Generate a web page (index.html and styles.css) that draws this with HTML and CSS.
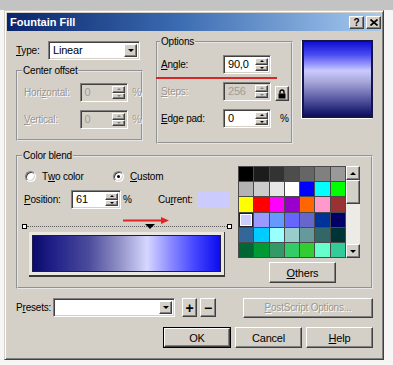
FILE: index.html
```html
<!DOCTYPE html>
<html lang="en">
<head>
  <meta charset="UTF-8">
  <title>Fountain Fill</title>
  <link rel="stylesheet" href="styles.css">
</head>
<body>
  <div class="dlg">
    <div class="titlebar">
      <span class="title">Fountain Fill</span>
      <div class="tbtns">
        <span class="tbtn q">?</span>
        <span class="tbtn"><svg width="8" height="7" viewBox="0 0 8 7"><path d="M0.5 0.5 L7.5 6.5 M7.5 0.5 L0.5 6.5" stroke="#000" stroke-width="1.7" fill="none"/></svg></span>
      </div>
    </div>

    <div class="main">
      <div class="top">
        <div class="leftcol">
          <div class="typerow">
            <span class="lbl w-type"><u>T</u>ype:</span>
            <div class="combo type-combo">
              <span class="txt">Linear</span>
              <span class="ddbtn"><i class="arr-down big"></i></span>
            </div>
          </div>

          <fieldset class="grp center-grp">
            <legend>Center offset</legend>
            <div class="frows">
              <div class="frow">
                <span class="lbl dis w-center">Hori<u>z</u>ontal:</span>
                <div class="spinfield sf-center dis">
                  <span class="txt">0</span>
                  <div class="spin"><span class="sb"><i class="arr-up"></i></span><span class="sb"><i class="arr-down"></i></span></div>
                </div>
                <span class="unit dis u-center">%</span>
              </div>
              <div class="frow">
                <span class="lbl dis w-center"><u>V</u>ertical:</span>
                <div class="spinfield sf-center dis">
                  <span class="txt">0</span>
                  <div class="spin"><span class="sb"><i class="arr-up"></i></span><span class="sb"><i class="arr-down"></i></span></div>
                </div>
                <span class="unit dis u-center">%</span>
              </div>
            </div>
          </fieldset>
        </div>

        <fieldset class="grp opt-grp">
          <legend>Options</legend>
          <div class="frows opt-rows">
            <div class="frow">
              <span class="lbl w-opt"><u>A</u>ngle:</span>
              <div class="spinfield sf-opt">
                <span class="txt">90,0</span>
                <div class="spin"><span class="sb"><i class="arr-up"></i></span><span class="sb"><i class="arr-down"></i></span></div>
              </div>
            </div>
            <div class="frow">
              <span class="lbl dis w-opt"><u>S</u>teps:</span>
              <div class="spinfield sf-opt dis">
                <span class="txt">256</span>
                <div class="spin"><span class="sb"><i class="arr-up"></i></span><span class="sb"><i class="arr-down"></i></span></div>
              </div>
              <span class="btn lock">
                <svg width="8" height="10" viewBox="0 0 8 10"><path d="M2 4.5 V3 a2 2 0 0 1 4 0 V4.5" stroke="#000" stroke-width="1.4" fill="none"/><rect x="0.5" y="4.5" width="7" height="5" fill="#000"/></svg>
              </span>
            </div>
            <div class="frow">
              <span class="lbl w-opt"><u>E</u>dge pad:</span>
              <div class="spinfield sf-opt">
                <span class="txt">0</span>
                <div class="spin"><span class="sb"><i class="arr-up"></i></span><span class="sb"><i class="arr-down"></i></span></div>
              </div>
              <span class="unit u-edge">%</span>
            </div>
          </div>
        </fieldset>

        <div class="preview"></div>
      </div>

      <fieldset class="grp blend-grp">
        <legend>Color blend</legend>
        <div class="blend-body">
          <div class="blend-left">
            <div class="radios">
              <span class="radio r-two"><span class="rb"></span>T<u>w</u>o color</span>
              <span class="radio"><span class="rb on"></span><u>C</u>ustom</span>
            </div>
            <div class="posrow">
              <span class="lbl w-pos"><u>P</u>osition:</span>
              <div class="spinfield sf-pos">
                <span class="txt">61</span>
                <div class="spin"><span class="sb"><i class="arr-up"></i></span><span class="sb"><i class="arr-down"></i></span></div>
              </div>
              <span class="unit u-pos">%</span>
              <span class="lbl cur-lbl">Cu<u>r</u>rent:</span>
              <span class="cur-swatch"></span>
            </div>
            <div class="ruler">
              <span class="node"></span>
              <span class="track"></span>
              <span class="node"></span>
              <i class="marker" style="left: 61%"></i>
            </div>
            <div class="barframe"><div class="bar"></div></div>
          </div>

          <div class="blend-right">
            <div class="palrow">
              <div class="palette">
                <span style="background:#000000"></span>
                <span style="background:#1c1c1c"></span>
                <span style="background:#333333"></span>
                <span style="background:#4d4d4d"></span>
                <span style="background:#666666"></span>
                <span style="background:#808080"></span>
                <span style="background:#999999"></span>

                <span style="background:#b3b3b3"></span>
                <span style="background:#cccccc"></span>
                <span style="background:#e6e6e6"></span>
                <span style="background:#ffffff"></span>
                <span style="background:#0000ff"></span>
                <span style="background:#00ffff"></span>
                <span style="background:#00ff00"></span>

                <span style="background:#ffff00"></span>
                <span style="background:#ff0000"></span>
                <span style="background:#ff00ff"></span>
                <span style="background:#9900cc"></span>
                <span style="background:#ff6600"></span>
                <span style="background:#ff99cc"></span>
                <span style="background:#993333"></span>

                <span class="sel" style="background:#ccccff"></span>
                <span style="background:#9999ff"></span>
                <span style="background:#6699ff"></span>
                <span style="background:#6666ff"></span>
                <span style="background:#6666cc"></span>
                <span style="background:#003399"></span>
                <span style="background:#000066"></span>

                <span style="background:#336699"></span>
                <span style="background:#00ccff"></span>
                <span style="background:#99ffff"></span>
                <span style="background:#99cccc"></span>
                <span style="background:#669999"></span>
                <span style="background:#336666"></span>
                <span style="background:#003333"></span>

                <span style="background:#006633"></span>
                <span style="background:#009933"></span>
                <span style="background:#339966"></span>
                <span style="background:#33cc66"></span>
                <span style="background:#33cc33"></span>
                <span style="background:#66ffcc"></span>
                <span style="background:#33cc99"></span>
              </div>
              <div class="vscroll">
                <span class="btn sbtn"><i class="arr-up big"></i></span>
                <span class="btn thumb"></span>
                <span class="strack"></span>
                <span class="btn sbtn"><i class="arr-down big"></i></span>
              </div>
            </div>
            <span class="btn others"><u>O</u>thers</span>
          </div>
        </div>
      </fieldset>

      <div class="presets">
        <span class="lbl w-pre">P<u>r</u>esets:</span>
        <div class="combo pre-combo">
          <span class="txt"></span>
          <span class="ddbtn"><i class="arr-down big"></i></span>
        </div>
        <span class="btn pm plus">+</span>
        <span class="btn pm minus">&minus;</span>
        <span class="btn ps dis"><u>P</u>ostScript Options...</span>
      </div>

      <div class="buttons">
        <span class="defbtn"><span class="btn">OK</span></span>
        <span class="btn">Cancel</span>
        <span class="btn"><u>H</u>elp</span>
      </div>
    </div>

    <div class="redline"></div>
    <svg class="redarrow" width="47" height="9" viewBox="0 0 47 9">
      <path d="M0 4.5 H40" stroke="#e02424" stroke-width="2"/>
      <path d="M38 1 L46 4.5 L38 8 Z" fill="#e02424"/>
    </svg>
  </div>
</body>
</html>
```

FILE: styles.css
```css
* {
  box-sizing: border-box;
}

html,
body {
  margin: 0;
  height: 100%;
}

body {
  padding: 10px 0 0 4px;
  background: linear-gradient(#c3c3c3, #c3c3c3) top left / 100% 10px no-repeat, #f6f6f6;
  font-family: "Liberation Sans", sans-serif;
  font-size: 10px;
  letter-spacing: -0.2px;
  color: #000;
  overflow: hidden;
}

u {
  text-decoration: underline;
  text-underline-offset: 1px;
}

/* window frame */
.dlg {
  position: relative;
  width: 380px;
  height: 350px;
  padding: 2px;
  background: #d4d0c8;
  border: 1px solid;
  border-color: #d4d0c8 #404040 #404040 #d4d0c8;
  box-shadow: inset 1px 1px #fff, inset -1px -1px #808080;
}

.titlebar {
  display: flex;
  align-items: center;
  justify-content: space-between;
  height: 18px;
  padding: 0 0 0 3px;
  background: linear-gradient(90deg, #0a246a, #3a6ab0 45%, #a6caf0);
}

.title {
  color: #fff;
  font-weight: bold;
  font-size: 11px;
  letter-spacing: 0;
}

.tbtns {
  display: flex;
  gap: 2px;
}

.tbtn {
  display: flex;
  align-items: center;
  justify-content: center;
  width: 15px;
  height: 13px;
  background: #d4d0c8;
  border: 1px solid;
  border-color: #fff #404040 #404040 #fff;
  box-shadow: inset -1px -1px #808080;
}

.tbtn.q {
  font-weight: bold;
  font-size: 10px;
  line-height: 11px;
}

/* shared bevels */
.btn,
.sb,
.ddbtn {
  display: flex;
  align-items: center;
  justify-content: center;
  background: #d4d0c8;
  border: 1px solid;
  border-color: #fff #404040 #404040 #fff;
  box-shadow: inset -1px -1px #808080;
}

.combo,
.spinfield {
  display: flex;
  padding: 2px;
  background: #fff;
  border: 1px solid;
  border-color: #808080 #fff #fff #808080;
  box-shadow: inset 1px 1px #404040, inset -1px -1px #d4d0c8;
}

.combo .txt,
.spinfield .txt {
  flex: 1;
  padding-left: 2px;
  line-height: 13px;
  font-size: 11px;
}

.spinfield.dis {
  background: #d4d0c8;
  color: #a09c94;
}

.lbl,
.unit {
  white-space: nowrap;
}

.dis {
  color: #9a968e;
  text-shadow: 1px 1px #fff;
}

.spinfield.dis .txt {
  text-shadow: none;
}

/* arrows */
.arr-up,
.arr-down {
  display: block;
  width: 0;
  height: 0;
  border-left: 2px solid transparent;
  border-right: 2px solid transparent;
}

.arr-up {
  border-bottom: 2px solid #000;
}

.arr-down {
  border-top: 2px solid #000;
}

.arr-up.big {
  border-width: 0 3px 3px;
}

.arr-down.big {
  border-width: 3px 3px 0;
}

.dis .arr-up {
  border-bottom-color: #808080;
}

.dis .arr-down {
  border-top-color: #808080;
}

.spin {
  display: flex;
  flex-direction: column;
  width: 13px;
}

.sb {
  flex: 1;
}

/* layout */
.main {
  padding: 4px 8px 0 9px;
}

.top {
  display: flex;
  align-items: flex-start;
}

.leftcol {
  width: 127px;
  padding-top: 6px;
}

.typerow {
  display: flex;
  align-items: center;
  height: 19px;
}

.w-type {
  width: 32px;
}

.type-combo {
  width: 92px;
  height: 19px;
}

.ddbtn {
  width: 13px;
}

/* group boxes */
.grp {
  margin: 0;
  padding: 0 0 0 5px;
  border: 2px groove #e6e6e6;
  min-width: 0;
}

.grp legend {
  margin-left: -1px;
  padding: 0 1px;
  line-height: 13px;
}

.center-grp {
  margin-top: 4px;
  width: 127px;
  height: 77px;
}

.frows {
  display: flex;
  flex-direction: column;
  gap: 8px;
  padding-top: 6px;
}

.frow {
  display: flex;
  align-items: center;
  height: 19px;
}

.w-center {
  width: 56px;
  margin-left: 1px;
}

.sf-center {
  width: 49px;
  height: 19px;
}

.u-center {
  margin-left: 4px;
}

.opt-grp {
  margin-left: 13px;
  width: 137px;
  height: 109px;
  padding-left: 2px;
}

.opt-grp legend {
  margin-left: 0;
}

.opt-rows {
  padding-top: 7px;
}

.w-opt {
  width: 63px;
  padding-left: 1px;
}

.sf-opt {
  width: 48px;
  height: 19px;
}

.lock {
  width: 14px;
  height: 15px;
  margin: 4px 0 0 4px;
}

.u-edge {
  margin-left: 9px;
}

.preview {
  width: 71px;
  height: 78px;
  margin: 5px 0 0 9px;
  border: 2px solid #14144a;
  box-shadow: -1px 1px 0 #fff;
  background: linear-gradient(#1010d4, #4a4af2 17%, #cacaff 39%, #a6a6da 54%, #5c5ca6 76%, #0c0c62);
}

/* color blend */
.blend-grp {
  margin-top: 5px;
  width: 357px;
  height: 140px;
}

.blend-body {
  display: flex;
}

.blend-left {
  width: 215px;
  padding-top: 8px;
}

.radios {
  display: flex;
  height: 13px;
  line-height: 13px;
}

.radio {
  display: flex;
  align-items: center;
}

.r-two {
  width: 88px;
  margin-left: 2px;
}

.rb {
  position: relative;
  width: 11px;
  height: 11px;
  margin-right: 6px;
  border-radius: 50%;
  background: #fff;
  border: 1px solid;
  border-color: #808080 #fff #fff #808080;
  box-shadow: inset 1px 1px #404040, inset -1px -1px #d4d0c8;
}

.rb.on::after {
  content: "";
  position: absolute;
  left: 3px;
  top: 3px;
  width: 3px;
  height: 3px;
  border-radius: 50%;
  background: #000;
}

.posrow {
  display: flex;
  align-items: center;
  height: 19px;
  margin-top: 7px;
}

.w-pos {
  width: 47px;
  margin-left: 1px;
}

.sf-pos {
  width: 50px;
  height: 19px;
}

.u-pos {
  margin-left: 2px;
  width: 7px;
}

.cur-lbl {
  margin-left: 28px;
  width: 39px;
}

.cur-swatch {
  width: 32px;
  height: 16px;
  background: #cbcbfd;
}

.ruler {
  position: relative;
  display: flex;
  align-items: center;
  width: 210px;
  height: 5px;
  margin: 15px 0 0 -1px;
}

.node {
  width: 5px;
  height: 5px;
  background: #fff;
  border: 1px solid #000;
}

.track {
  flex: 1;
  border-top: 1px dotted #5a5a5a;
}

.marker {
  position: absolute;
  top: 0;
  width: 0;
  height: 0;
  transform: translateX(-50%);
  border-left: 5px solid transparent;
  border-right: 5px solid transparent;
  border-top: 5px solid #000;
}

.barframe {
  width: 196px;
  height: 45px;
  margin: 3px 0 0 6px;
  padding: 3px;
  background: #ebe8e2;
  border-right: 1px solid #3a3a3a;
  border-bottom: 2px solid #3a3a3a;
}

.bar {
  height: 100%;
  border: 1px solid #1c1c50;
  background: linear-gradient(90deg, #0a0a6c, #22228a 12%, #4c4c9c 30%, #9090c6 46%, #d6d6ff 61%, #8e8eff 73%, #4848ff 86%, #0c0cf0);
}

.blend-right {
  padding-top: 4px;
}

.palrow {
  display: flex;
}

.palette {
  display: grid;
  grid-template-columns: repeat(7, 1fr);
  grid-template-rows: repeat(6, 1fr);
  gap: 1px;
  width: 108px;
  height: 92px;
  padding: 1px;
  background: #4a4a4a;
}

.palette .sel {
  box-shadow: inset 0 0 0 1px #202020, inset 0 0 0 2px #fff;
}

.vscroll {
  display: flex;
  flex-direction: column;
  width: 14px;
  height: 92px;
}

.sbtn {
  height: 14px;
}

.thumb {
  height: 24px;
}

.strack {
  flex: 1;
  background: #ecebe6;
}

.others {
  width: 67px;
  height: 21px;
  margin: 4px 0 0 31px;
  font-size: 11px;
}

/* bottom rows */
.presets {
  display: flex;
  align-items: center;
  height: 19px;
  margin-top: 9px;
}

.w-pre {
  width: 37px;
}

.pre-combo {
  width: 122px;
  height: 19px;
}

.pm {
  width: 15px;
  height: 19px;
  font-weight: bold;
  font-size: 14px;
}

.plus {
  margin-left: 7px;
}

.minus {
  margin-left: 3px;
  width: 16px;
}

.ps {
  width: 130px;
  height: 20px;
  margin-left: 27px;
}

.buttons {
  display: flex;
  justify-content: flex-end;
  gap: 4px;
  margin-top: 10px;
}

.buttons .btn {
  width: 67px;
  height: 21px;
  font-size: 11px;
}

.defbtn {
  display: flex;
  border: 1px solid #000;
}

.defbtn .btn {
  width: 66px;
  height: 19px;
}

/* hand-drawn annotations */
.redline {
  position: absolute;
  left: 151px;
  top: 66px;
  width: 121px;
  height: 2px;
  background: #d42828;
}

.redarrow {
  position: absolute;
  left: 118px;
  top: 205px;
}
```
